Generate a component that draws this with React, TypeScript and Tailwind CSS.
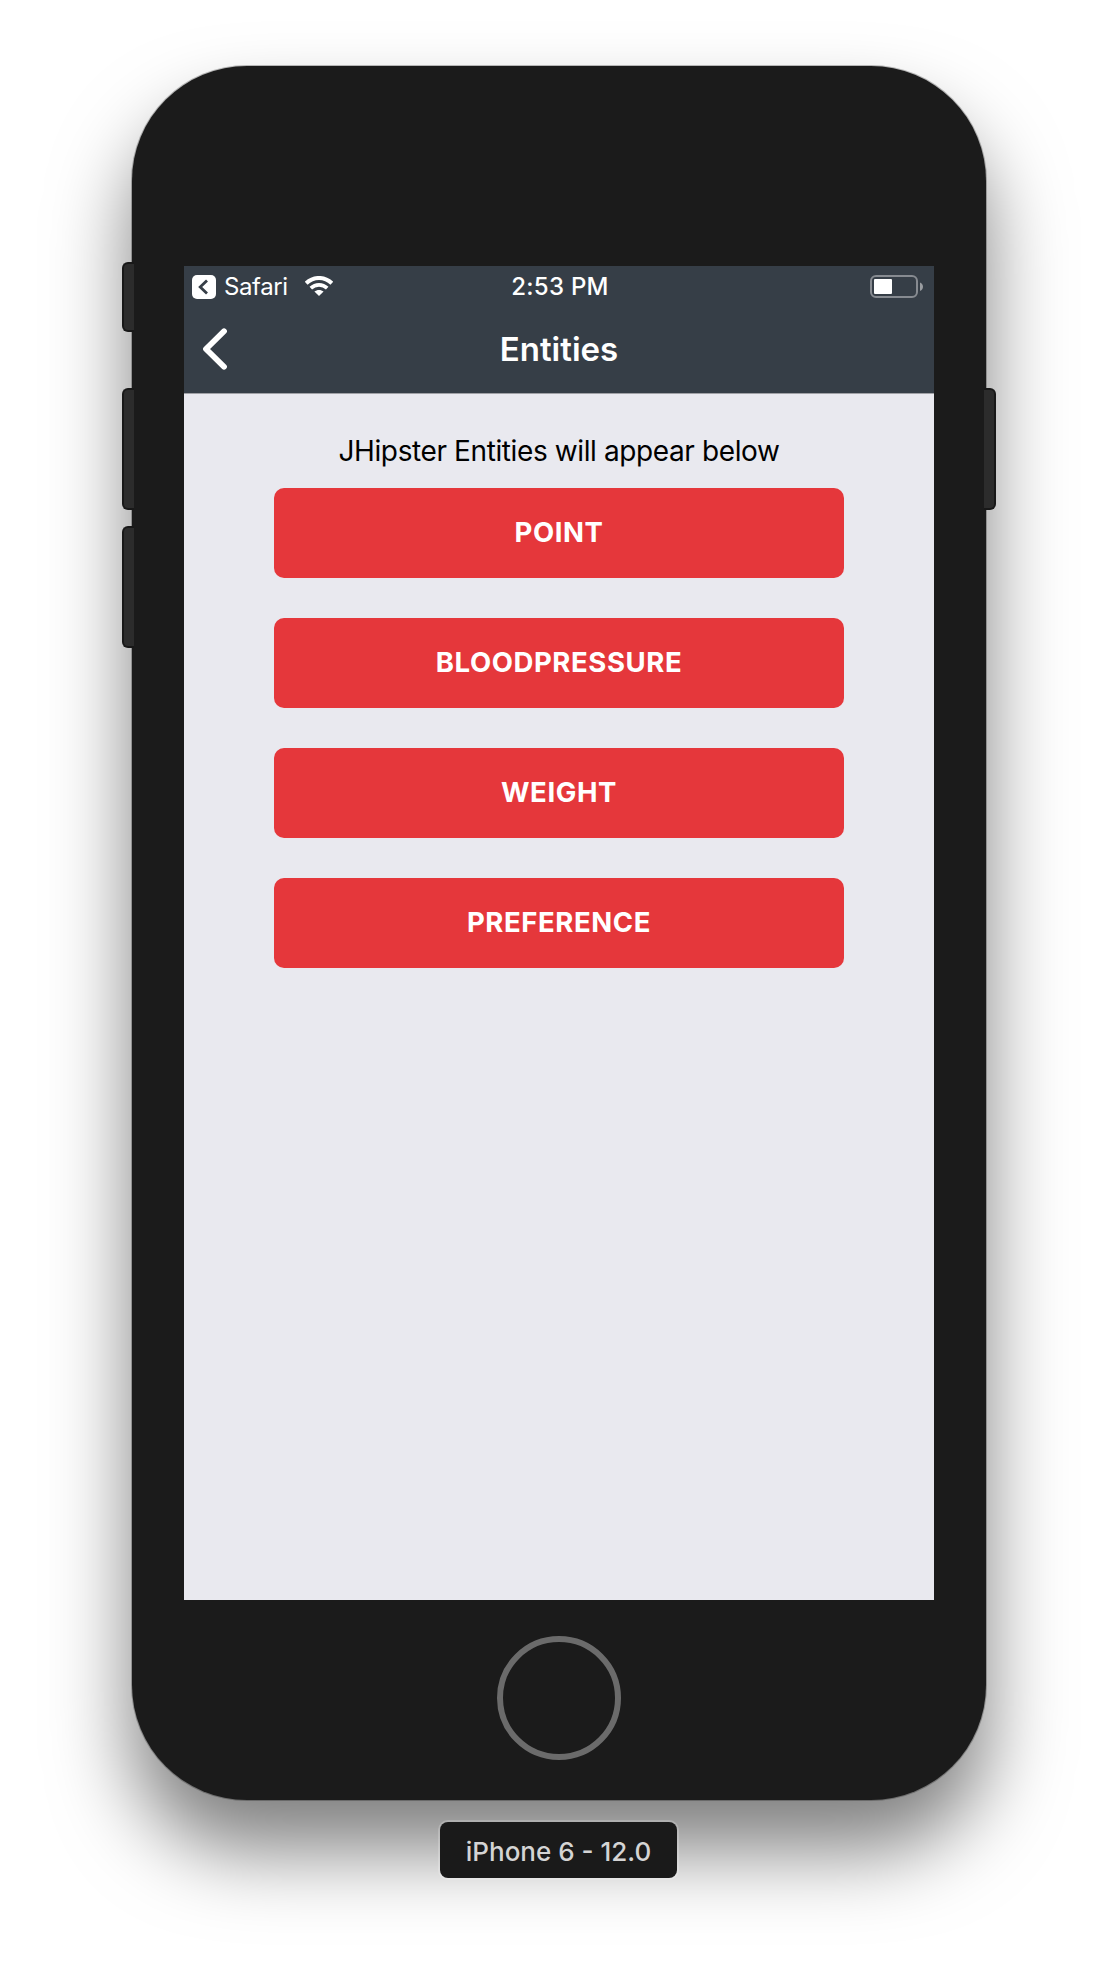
import { ReactNode } from 'react';

const ENTITIES = ['POINT', 'BLOODPRESSURE', 'WEIGHT', 'PREFERENCE'];

function StatusBar() {
  return (
    <div className="grid h-[42px] grid-cols-[1fr_auto_1fr] items-center pl-2 pr-[7px] text-[24px] leading-10">
      <div className="flex items-center">
        <svg width="24" height="24" viewBox="0 0 24 24">
          <rect width="24" height="24" rx="5" fill="#fff" />
          <path d="M15 5.5 8.200 12 15 18.500" fill="none" stroke="#363e47" strokeWidth="2.8" />
        </svg>
        <span className="ml-2 w-[64px] whitespace-nowrap tracking-[-0.4px]">Safari</span>
        <svg className="-mt-[2px] ml-[17px]" width="28" height="20" viewBox="0 0 28 20" fill="none" stroke="#fff">
          <path d="M1.200 7.200C8.500 0.200 19.500 0.200 26.800 7.200" strokeWidth="4" />
          <path d="M5.800 12.100C10.500 7.700 17.500 7.700 22.200 12.100" strokeWidth="3.700" />
          <path d="M14 20 9.400 15.600C12 13.400 16 13.400 18.600 15.600Z" fill="#fff" stroke="none" />
        </svg>
      </div>
      <div className="pl-px text-center font-medium tracking-[0.25px]">2:53 PM</div>
      <div className="flex justify-end pr-1">
        <svg className="-mt-px" width="53" height="23" viewBox="0 0 53 23">
          <rect x="1" y="1" width="46" height="21" rx="5" fill="none" stroke="#878b91" strokeWidth="2" />
          <rect x="4" y="4" width="18" height="15" rx="1" fill="#fff" />
          <path d="M50 7.500c4 1.500 4 7 0 8.500Z" fill="#9a9da1" />
        </svg>
      </div>
    </div>
  );
}

function Screen({ children }: { children: ReactNode }) {
  return (
    <div className="h-[1334px] w-[750px] bg-[#e9e9ef]">
      <header className="h-32 border-b border-[#a0a1a6] bg-[#363e47] text-white">
        <StatusBar />
        <div className="grid h-[83px] grid-cols-3 items-center">
          <svg className="-mt-[2px] ml-[17px]" width="27" height="44" viewBox="0 0 27 44">
            <path d="M23 4.300 5 22 23 39.700" fill="none" stroke="#fff" strokeWidth="5.800" strokeLinecap="round" strokeLinejoin="round" />
          </svg>
          <h1 className="text-center text-[33px] font-semibold tracking-[0px]">Entities</h1>
        </div>
      </header>
      {children}
    </div>
  );
}

export default function App() {
  return (
    <div className="flex h-[1962px] w-[1118px] flex-col items-center overflow-hidden bg-white pt-[66px] font-['Inter',sans-serif]">
      <div className="relative flex h-[1734px] w-[854px] flex-col items-center rounded-[115px] bg-[#1b1b1b] pt-[200px] shadow-[0_0_0_1px_rgba(0,0,0,0.25),0_50px_80px_rgba(0,0,0,0.5)]">
        <div className="absolute -left-[10px] top-[196px] h-[70px] w-3 rounded-l-[6px] border-2 border-r-0 border-[#181818] bg-[#2c2c2c]" />
        <div className="absolute -left-[10px] top-[322px] h-[122px] w-3 rounded-l-[6px] border-2 border-r-0 border-[#181818] bg-[#2c2c2c]" />
        <div className="absolute -left-[10px] top-[460px] h-[122px] w-3 rounded-l-[6px] border-2 border-r-0 border-[#181818] bg-[#2c2c2c]" />
        <div className="absolute -right-[10px] top-[322px] h-[122px] w-3 rounded-r-[6px] border-2 border-l-0 border-[#181818] bg-[#2c2c2c]" />
        <Screen>
          <main className="flex flex-col items-center pt-[37px]">
            <p className="whitespace-nowrap text-[28px] leading-10 tracking-[-0.39px] text-black">JHipster Entities will appear below</p>
            <div className="mt-[17px] flex flex-col gap-10">
              {ENTITIES.map((name) => (
                <button key={name} className="h-[90px] w-[570px] rounded-[10px] bg-[#e5373b] pb-px text-[27.5px] font-bold tracking-[0.6px] text-white">
                  {name}
                </button>
              ))}
            </div>
          </main>
        </Screen>
        <div className="mt-9 h-[124px] w-[124px] rounded-full border-[6px] border-[#6b6b6b]" />
      </div>
      <div className="relative mr-px mt-[22px] flex h-14 w-[237px] items-center justify-center rounded-lg bg-[#1a1a1a] pt-[2px] text-[26px] font-medium text-[#d4d4d4] shadow-[0_0_0_2px_rgba(255,255,255,0.2)]">
        iPhone 6 - 12.0
      </div>
    </div>
  );
}
